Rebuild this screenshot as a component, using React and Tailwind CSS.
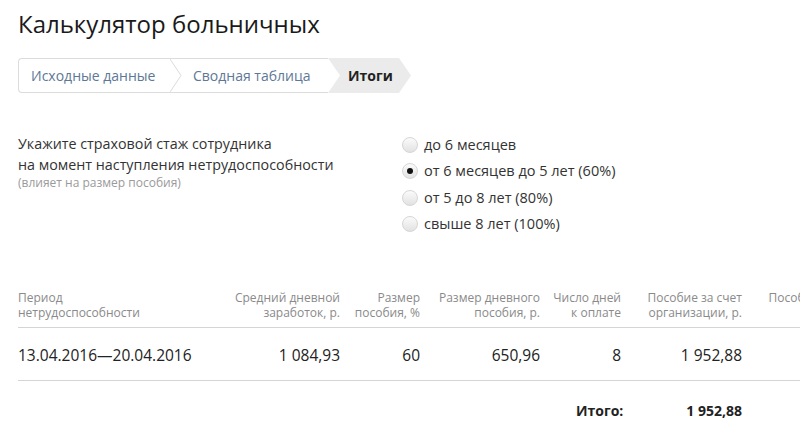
import React from "react";

const font = { fontFamily: '"Open Sans", "Noto Sans", sans-serif' };

const options = [
  { label: "до 6 месяцев", checked: false },
  { label: "от 6 месяцев до 5 лет (60%)", checked: true },
  { label: "от 5 до 8 лет (80%)", checked: false },
  { label: "свыше 8 лет (100%)", checked: false },
];

const Radio = ({ checked }) => (
  <span className="w-[16px] h-[16px] rounded-full border border-[#d6d6d6] bg-gradient-to-b from-[#fbfbfb] to-[#e2e2e2] flex items-center justify-center shrink-0">
    {checked && <span className="w-[6px] h-[6px] rounded-full bg-[#111]" />}
  </span>
);

const Breadcrumbs = () => (
  <div className="flex h-[35px] w-[393px] text-[14px]">
    <div className="flex items-center pl-[12px] w-[152px] border-y border-l border-[#dcdcdc] rounded-l-[4px] text-[#5d7896]">
      Исходные данные
    </div>
    <svg width="12" height="35" className="shrink-0">
      <line x1="0" y1="0.5" x2="12" y2="0.5" stroke="#dcdcdc" />
      <line x1="0" y1="34.5" x2="12" y2="34.5" stroke="#dcdcdc" />
      <polyline points="0,1 11,17.5 0,34" fill="none" stroke="#dcdcdc" />
    </svg>
    <div className="flex items-center pl-[11px] w-[146px] border-y border-[#dcdcdc] text-[#5d7896]">
      Сводная таблица
    </div>
    <div className="relative w-[83px] flex items-center pl-[20px] font-bold text-[#222]">
      <svg width="83" height="35" className="absolute inset-0">
        <polygon points="0,0 71,0 83,17.5 71,35 0,35 12,17.5" fill="#ebebeb" />
      </svg>
      <span className="relative">Итоги</span>
    </div>
  </div>
);

const cols = ["w-[182px] text-left", "w-[140px] text-right", "w-[80px] text-right", "w-[120px] text-right", "w-[81px] text-right", "w-[121px] text-right", "w-[121px] text-right"];

const headers = [
  ["Период", "нетрудоспособности"],
  ["Средний дневной", "заработок, р."],
  ["Размер", "пособия, %"],
  ["Размер дневного", "пособия, р."],
  ["Число дней", "к оплате"],
  ["Пособие за счет", "организации, р."],
  ["Пособие за счет", "ФСС, р."],
];

const row = ["13.04.2016\u201420.04.2016", "1 084,93", "60", "650,96", "8", "1 952,88", "5 854,80"];

export default function App() {
  return (
    <div className="w-[800px] h-[445px] overflow-hidden bg-white pl-[18px] text-[#333]" style={font}>
      <h1 className="text-[24px] leading-[32px] pt-[8px] text-[#1a1a1a]">Калькулятор больничных</h1>
      <div className="mt-[18px]">
        <Breadcrumbs />
      </div>

      <div className="flex mt-[40px]">
        <div className="w-[384px] text-[14.3px] leading-[21px]">
          <div>Укажите страховой стаж сотрудника</div>
          <div>на момент наступления нетрудоспособности</div>
          <div className="text-[12px] leading-[16px] text-[#9a9a9a]">(влияет на размер пособия)</div>
        </div>
        <div className="flex flex-col gap-[5px] text-[14.5px] pt-[1px]">
          {options.map((o) => (
            <label key={o.label} className="flex items-center gap-[6px] h-[21.5px]">
              <Radio checked={o.checked} />
              <span>{o.label}</span>
            </label>
          ))}
        </div>
      </div>

      <div className="w-[845px] mt-[55px]">
        <div className="flex text-[12px] leading-[15px] text-[#8a8a8a] pb-[7px] border-b border-[#d5d5d5]">
          {headers.map((h, i) => (
            <div key={i} className={cols[i]}>
              <div>{h[0]}</div>
              <div>{h[1]}</div>
            </div>
          ))}
        </div>
        <div className="flex items-center h-[53px] pt-[4px] text-[15.5px] text-[#222] border-b border-[#d5d5d5]">
          {row.map((c, i) => (
            <div key={i} className={cols[i]}>{c}</div>
          ))}
        </div>
        <div className="flex items-center h-[58px] text-[14px] font-bold text-[#222]">
          <div className="w-[558px]" />
          <div className="w-[45px]">Итого:</div>
          <div className="w-[121px] text-right">1 952,88</div>
        </div>
      </div>
    </div>
  );
}
